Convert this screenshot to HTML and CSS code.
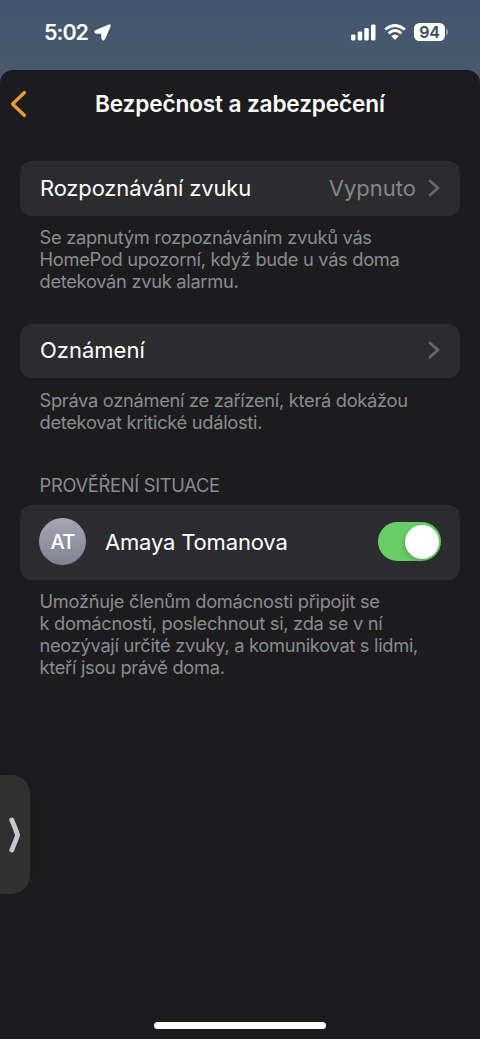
FILE: index.html
```html
<!DOCTYPE html>
<html lang="cs">
<head>
<meta charset="utf-8">
<title>Bezpečnost a zabezpečení</title>
<link rel="stylesheet" href="styles.css">
</head>
<body>
<header class="status">
  <div class="clock"><span class="time">5:02</span>
    <svg width="17" height="17" viewBox="0 0 17 17"><path d="M1.4 6.7 14.8.9Q17 .2 16.2 2.3L10.6 15.2Q8.9 17.3 7.9 15.1L7.7 9.3 1.9 9.2Q-.4 8.2 1.4 6.7Z" fill="#fff" stroke="#fff" stroke-width=".9"/></svg>
  </div>
  <div class="indicators">
    <svg width="25" height="17" viewBox="0 0 25 17" fill="#fff"><rect x="0" y="10.5" width="4.5" height="6" rx="1.4"/><rect x="6.7" y="7.5" width="4.5" height="9" rx="1.4"/><rect x="13.3" y="4" width="4.5" height="12.5" rx="1.4"/><rect x="20" y="0.5" width="4.5" height="16" rx="1.4"/></svg>
    <svg class="wifi" width="22" height="16" viewBox="0 0 22 16" fill="none" stroke="#fff" stroke-width="2.9"><path d="M1.2 5.5Q11-2.6 20.8 5.5"/><path d="M4.7 9.3Q11 3.9 17.3 9.3"/><path d="M7.2 12.1Q11 9 14.8 12.1L11 15.9Z" fill="#fff" stroke="none"/></svg>
    <span class="battery">94</span><span class="cap"></span>
  </div>
</header>
<main class="sheet">
  <div class="nav">
    <svg class="back" width="18" height="28" viewBox="0 0 18 28"><path d="M15.5 2.5 3.5 14 15.5 25.5" fill="none" stroke="#eb9d3b" stroke-width="3.2" stroke-linecap="round" stroke-linejoin="round"/></svg>
    <h1>Bezpečnost a zabezpečení</h1>
  </div>
  <section class="group first">
    <div class="row"><span class="label">Rozpoznávání zvuku</span><span class="value">Vypnuto</span>
      <svg class="chev" width="12" height="18" viewBox="0 0 12 18"><path d="M2 2 10 9 2 16" fill="none" stroke="#69696d" stroke-width="2.8" stroke-linecap="round" stroke-linejoin="round"/></svg></div>
    <p class="note">Se zapnutým rozpoznáváním zvuků vás<br>HomePod upozorní, když bude u vás doma<br>detekován zvuk alarmu.</p>
  </section>
  <section class="group second">
    <div class="row"><span class="label wide">Oznámení</span>
      <svg class="chev" width="12" height="18" viewBox="0 0 12 18"><path d="M2 2 10 9 2 16" fill="none" stroke="#69696d" stroke-width="2.8" stroke-linecap="round" stroke-linejoin="round"/></svg></div>
    <p class="note">Správa oznámení ze zařízení, která dokážou<br>detekovat kritické události.</p>
  </section>
  <section class="group third">
    <h2>PROVĚŘENÍ SITUACE</h2>
    <div class="row person"><span class="avatar">AT</span><span class="label">Amaya Tomanova</span><span class="toggle"><span class="knob"></span></span></div>
    <p class="note">Umožňuje členům domácnosti připojit se<br>k domácnosti, poslechnout si, zda se v ní<br>neozývají určité zvuky, a komunikovat s lidmi,<br>kteří jsou právě doma.</p>
  </section>
</main>
<div class="drawer"><svg width="14" height="36" viewBox="0 0 14 36"><path d="M3.8 3 Q8 13 9.6 18 Q8 23 3.8 33" fill="none" stroke="#c9c8d0" stroke-width="4.8" stroke-linecap="round" stroke-linejoin="round"/></svg></div>
<div class="home"></div>
</body>
</html>
```
FILE: styles.css
```css
* { box-sizing: border-box; }
body { margin: 0; height: 1039px; overflow: hidden; display: flex; flex-direction: column; background: linear-gradient(#42566f, #485a6a 80px); color: #fff; font-family: Inter, "Liberation Sans", sans-serif; }
svg { display: block; flex: none; }
.status { height: 70px; flex: none; display: flex; justify-content: space-between; padding: 22px 32px 0 44px; }
.clock { display: flex; height: 20px; align-items: center; gap: 5px; }
.time { font-size: 21.5px; font-weight: 600; letter-spacing: -1px; width: 45px; line-height: 20px; }
.indicators { display: flex; height: 20px; align-items: center; }
.wifi { margin: 0 8px 0 8.5px; }
.battery { width: 31px; height: 18px; border-radius: 5.5px; background: #fff; color: #364a62; font-size: 16px; font-weight: 600; line-height: 18px; text-align: center; letter-spacing: -.3px; }
.cap { width: 2px; height: 6px; margin-left: 1px; border-radius: 0 2px 2px 0; background: #929ead; }
.sheet { flex: 1; background: #1c1c1e; border-radius: 13px 13px 0 0; padding: 0 20px; }
.nav { height: 91px; display: flex; align-items: flex-start; padding-top: 20px; }
.back { margin-left: -11px; }
h1 { margin: 0; flex: 1; padding-left: 68px; font-size: 22.6px; font-weight: 600; line-height: 28px; letter-spacing: -0.13px; white-space: nowrap; }
.row { height: 54.5px; border-radius: 12px; background: #2c2c2e; display: flex; align-items: center; padding: 0 20px 1px; }
.label { flex: 1; font-size: 22px; letter-spacing: -0.17px; white-space: nowrap; }
.wide { letter-spacing: 0; }
.value { font-size: 22px; color: #85858a; margin-right: 12px; }
.note { margin: 10.5px 0 0; padding-left: 19.5px; font-size: 18.3px; letter-spacing: -0.3px; line-height: 22px; color: #8b8b90; white-space: nowrap; }
.second { margin-top: 31.5px; }
.third { margin-top: 40.5px; }
h2 { margin: 0; padding-left: 19.5px; font-size: 18.3px; font-weight: 400; line-height: 24px; height: 32px; letter-spacing: -0.28px; color: #8b8b90; }
.person { height: 74.5px; padding: 0 19px 1px; }
.avatar { width: 47px; height: 47px; border-radius: 50%; background: linear-gradient(#a4a7b3, #80838f); text-align: center; line-height: 48px; font-size: 20px; font-weight: 550; letter-spacing: -.8px; margin-right: 19px; }
.toggle { width: 63px; height: 39px; border-radius: 20px; background: #67ce67; display: flex; align-items: center; justify-content: flex-end; padding-right: 2.5px; }
.knob { width: 34px; height: 34px; border-radius: 50%; background: #fff; box-shadow: -1px 2px 4px rgba(0,0,0,.18); }
.drawer { position: absolute; left: 0; top: 775px; width: 30px; height: 119px; border-radius: 0 19px 19px 0; background: #303031; box-shadow: 0 0 40px rgba(0,0,0,.12); display: flex; align-items: center; padding-left: 8px; }
.home { position: absolute; left: 154px; top: 1022px; width: 172px; height: 7px; border-radius: 4px; background: #fff; }
```
